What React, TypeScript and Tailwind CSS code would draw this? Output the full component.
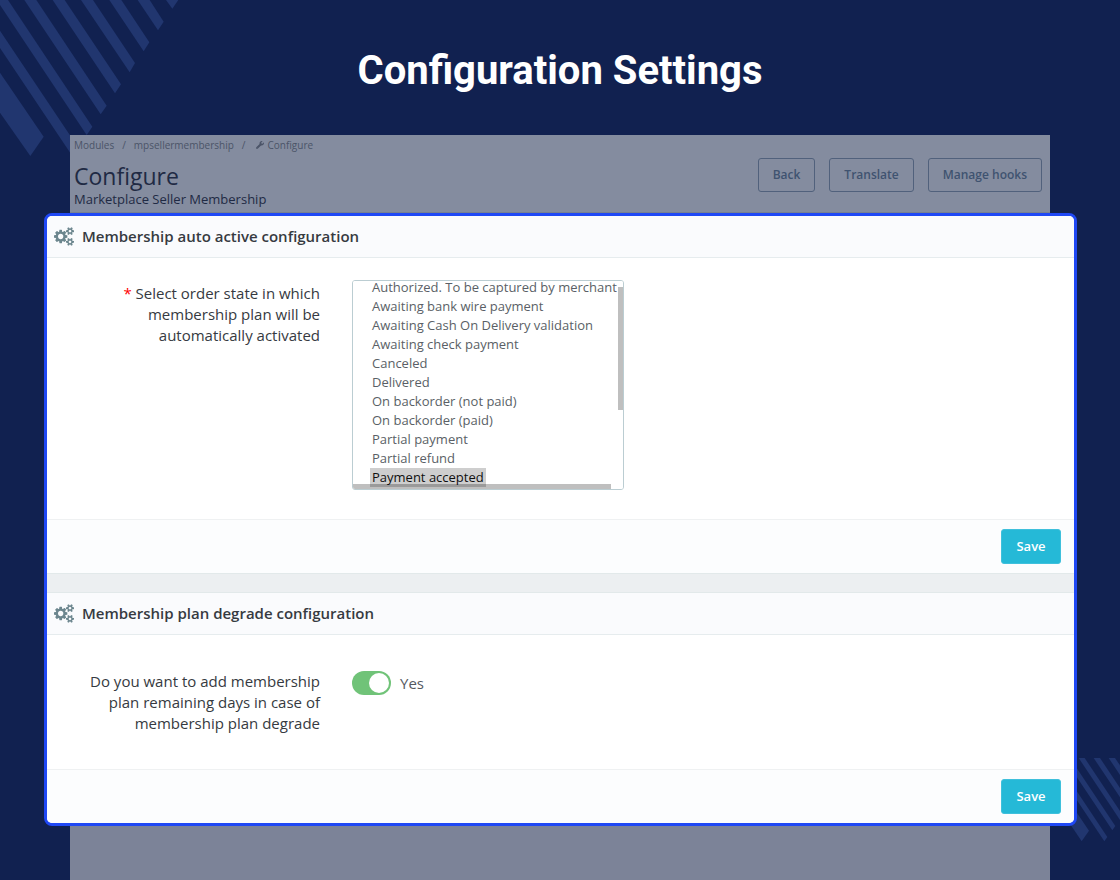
import { useState, type ReactNode } from 'react'
import { FaWrench } from 'react-icons/fa'

// ── Data ─────────────────────────────────────────────────────

const ORDER_STATES = [
  'Authorized. To be captured by merchant',
  'Awaiting bank wire payment',
  'Awaiting Cash On Delivery validation',
  'Awaiting check payment',
  'Canceled',
  'Delivered',
  'On backorder (not paid)',
  'On backorder (paid)',
  'Partial payment',
  'Partial refund',
  'Payment accepted',
]

const HEADER_ACTIONS = ['Back', 'Translate', 'Manage hooks']

// ── Background stripes ───────────────────────────────────────

function StripesTop() {
  return (
    <svg
      aria-hidden="true"
      viewBox="0 0 540 480"
      className="absolute top-0 left-0 h-40 w-[180px] fill-[#21366f]"
    >
      <path d="M0 218 131 410 91 468 0 338Z" />
      <path d="M0 92 235 443 217 468 0 144Z" />
      <path d="M0 0H24L277 380 260 405 0 15Z" />
      <path d="M73 0H109L320 317 302 343Z" />
      <path d="M158 0H194L363 253 345 280Z" />
      <path d="M243 0H279L405 189 389 217Z" />
      <path d="M328 0H364L448 127 431 154Z" />
      <path d="M413 0H449L491 65 474 91Z" />
      <path d="M498 0H535L517 26Z" />
    </svg>
  )
}

function StripesBottom() {
  return (
    <svg
      aria-hidden="true"
      viewBox="0 54 240 252"
      className="absolute right-0 bottom-[38px] h-[84px] w-20 fill-[#21366f]"
    >
      <path d="M0 54 147 272 125 304 0 118Z" />
      <path d="M26 54H44L202 291 193 304Z" />
      <path d="M72 54H90L226 258 217 271Z" />
      <path d="M116 54H134L240 213V240Z" />
      <path d="M161 54H180L240 144V172Z" />
      <path d="M206 54H225L240 76V105Z" />
    </svg>
  )
}

// ── Panel pieces ─────────────────────────────────────────────

function CogsIcon() {
  return (
    <svg aria-hidden="true" viewBox="0 0 1920 1792" className="h-[19px] w-5 fill-[#6c868e]">
      <path d="M896 896q0-106-75-181t-181-75-181 75-75 181 75 181 181 75 181-75 75-181zm768 512q0-52-38-90t-90-38-90 38-38 90q0 53 37.5 90.5t90.5 37.5 90.5-37.5 37.5-90.5zm0-1024q0-52-38-90t-90-38-90 38-38 90q0 53 37.5 90.5t90.5 37.5 90.5-37.5 37.5-90.5zm-384 421v185q0 10-7 19.5t-16 10.5l-155 24q-11 35-32 76 34 48 90 115 7 11 7 20 0 12-7 19-23 30-82.5 89.5t-78.5 59.5q-11 0-21-7l-115-90q-37 19-77 31-11 108-23 155-7 24-30 24h-186q-11 0-20-7.5t-10-17.5l-23-153q-34-10-75-31l-118 89q-7 7-20 7-11 0-21-8-144-133-144-160 0-9 7-19 10-14 41-53t47-61q-23-44-35-82l-152-24q-10-1-17-9.5t-7-19.5v-185q0-10 7-19.5t16-10.5l155-24q11-35 32-76-34-48-90-115-7-11-7-20 0-12 7-20 22-30 82-89t79-59q11 0 21 7l115 90q34-18 77-32 11-108 23-154 7-24 30-24h186q11 0 20 7.5t10 17.5l23 153q34 10 75 31l118-89q8-7 20-7 11 0 21 8 144 133 144 160 0 8-7 19-12 16-42 54t-45 60q23 48 34 82l152 23q10 2 17 10.5t7 19.5zm640 533v140q0 16-149 31-12 27-30 52 51 113 51 138 0 4-4 7-122 71-124 71-8 0-46-47t-52-68q-20 2-30 2t-30-2q-14 21-52 68t-46 47q-2 0-124-71-4-3-4-7 0-25 51-138-18-25-30-52-149-15-149-31v-140q0-16 149-31 13-29 30-52-51-113-51-138 0-4 4-7 4-2 35-20t59-34 30-16q8 0 46 46.5t52 67.5q20-2 30-2t30 2q51-71 92-112l6-2q4 0 124 70 4 3 4 7 0 25-51 138 17 23 30 52 149 15 149 31zm0-1024v140q0 16-149 31-12 27-30 52 51 113 51 138 0 4-4 7-122 71-124 71-8 0-46-47t-52-68q-20 2-30 2t-30-2q-14 21-52 68t-46 47q-2 0-124-71-4-3-4-7 0-25 51-138-18-25-30-52-149-15-149-31v-140q0-16 149-31 13-29 30-52-51-113-51-138 0-4 4-7 4-2 35-20t59-34 30-16q8 0 46 46.5t52 67.5q20-2 30-2t30 2q51-71 92-112l6-2q4 0 124 70 4 3 4 7 0 25-51 138 17 23 30 52 149 15 149 31z" />
    </svg>
  )
}

function PanelHeading({ children }: { children: ReactNode }) {
  return (
    <h3 className="flex h-[42px] items-center gap-2 border-b border-[#e6ecee] bg-[#fafbfd] px-[7px] text-[15px] font-semibold text-[#363a41]">
      <CogsIcon />
      {children}
    </h3>
  )
}

function PanelFooter() {
  return (
    <div className="flex justify-end border-t border-[#eff1f2] bg-[#fcfdfe] px-[13px] py-[9px]">
      <button
        type="submit"
        className="h-[35px] min-w-15 rounded-[3px] border border-[#3fc0dc] bg-[#25b9d7] px-3 text-[13px] font-semibold text-white hover:bg-[#1f9db6]"
      >
        Save
      </button>
    </div>
  )
}

// ── Main Component ───────────────────────────────────────────

export default function App() {
  const [states, setStates] = useState<string[]>(['Payment accepted'])
  const [keepDays, setKeepDays] = useState(true)

  return (
    <main className="relative flex min-h-screen flex-col overflow-hidden bg-[#112150] font-['Open_Sans','Noto_Sans',sans-serif]">
      <StripesTop />
      <StripesBottom />

      <h1 className="relative pt-[47px] pb-10 text-center font-['Roboto',sans-serif] text-[40px] leading-12 font-bold text-white">
        Configuration Settings
      </h1>

      <div className="relative mx-[70px] flex-1 bg-[#7c8398]">
        {/* Page header */}
        <header className="flex h-[78px] justify-between border-b border-[#767f90] bg-[#848c9f] pr-2 pl-1">
          <div>
            <nav className="flex items-center pt-0.5 text-[10px] leading-4 text-[#4b5468]">
              <a href="#modules">Modules</a>
              <span className="px-2">/</span>
              <a href="#mpsellermembership">mpsellermembership</a>
              <span className="px-2">/</span>
              <a href="#configure" className="flex items-center gap-1 pl-0.5">
                <FaWrench className="size-2" />
                Configure
              </a>
            </nav>
            <h2 className="pt-2 text-[23px] leading-[30px] text-[#1f2a44]">Configure</h2>
            <p className="text-[13px] leading-4 text-[#1f2a44]">Marketplace Seller Membership</p>
          </div>
          <div className="flex gap-3.5 pt-[23px]">
            {HEADER_ACTIONS.map((label) => (
              <button
                key={label}
                type="button"
                className="h-[34px] rounded-[3px] border border-[#51617c] px-3.5 text-[12px] font-semibold text-[#3f5370] hover:bg-white/10"
              >
                {label}
              </button>
            ))}
          </div>
        </header>

        {/* Highlighted settings */}
        <div className="-mr-[27px] -ml-[26px] overflow-hidden rounded-lg border-3 border-[#1f48f5] bg-white">
          <form onSubmit={(e) => e.preventDefault()}>
            <PanelHeading>Membership auto active configuration</PanelHeading>
            <div className="flex gap-8 pt-[22px] pb-[29px]">
              <label
                htmlFor="order-states"
                className="w-[273px] pt-[3px] pl-10 text-right text-[15px] leading-[21px] text-[#363a41]"
              >
                <span className="text-[#f00]">*</span> Select order state in which membership plan will be automatically
                activated
              </label>
              <div className="relative h-[210px] w-[272px] overflow-hidden rounded-[3px] border border-[#bbcdd2]">
                <select
                  id="order-states"
                  multiple
                  value={states}
                  onChange={(e) => setStates(Array.from(e.target.selectedOptions, (o) => o.value))}
                  className="-mt-[3px] h-[214px] w-full overflow-hidden bg-white pl-[17px] text-[13px] text-[#5a5f66] outline-none [scrollbar-width:none]"
                >
                  {ORDER_STATES.map((s) => (
                    <option key={s} value={s} className="h-[19px] min-h-0 w-fit px-0.5 py-0 leading-[19px]">
                      {s}
                    </option>
                  ))}
                </select>
                <span className="absolute top-1.5 right-0 h-[123px] w-[5px] bg-black/25" />
                <span className="absolute bottom-0 left-0 h-[5px] w-[258px] bg-black/25" />
              </div>
            </div>
            <PanelFooter />
          </form>

          <div className="h-5 border-y border-[#e2e9ea] bg-[#eceff1]" />

          <form onSubmit={(e) => e.preventDefault()}>
            <PanelHeading>Membership plan degrade configuration</PanelHeading>
            <div className="flex gap-8 pt-9 pb-[35px]">
              <label
                htmlFor="keep-days"
                className="w-[273px] pl-10 text-right text-[15px] leading-[21px] text-[#363a41]"
              >
                Do you want to add membership plan remaining days in case of membership plan degrade
              </label>
              <div className="flex h-6 items-center gap-[9px] text-[15px] text-[#55595f]">
                <input
                  id="keep-days"
                  type="checkbox"
                  role="switch"
                  checked={keepDays}
                  onChange={(e) => setKeepDays(e.target.checked)}
                  className="flex h-6 w-[39px] appearance-none items-center rounded-full bg-[#b3c7cd] px-0.5 before:size-5 before:rounded-full before:bg-white checked:justify-end checked:bg-[#70c378]"
                />
                <span className="leading-5">{keepDays ? 'Yes' : 'No'}</span>
              </div>
            </div>
            <PanelFooter />
          </form>
        </div>
      </div>
    </main>
  )
}
